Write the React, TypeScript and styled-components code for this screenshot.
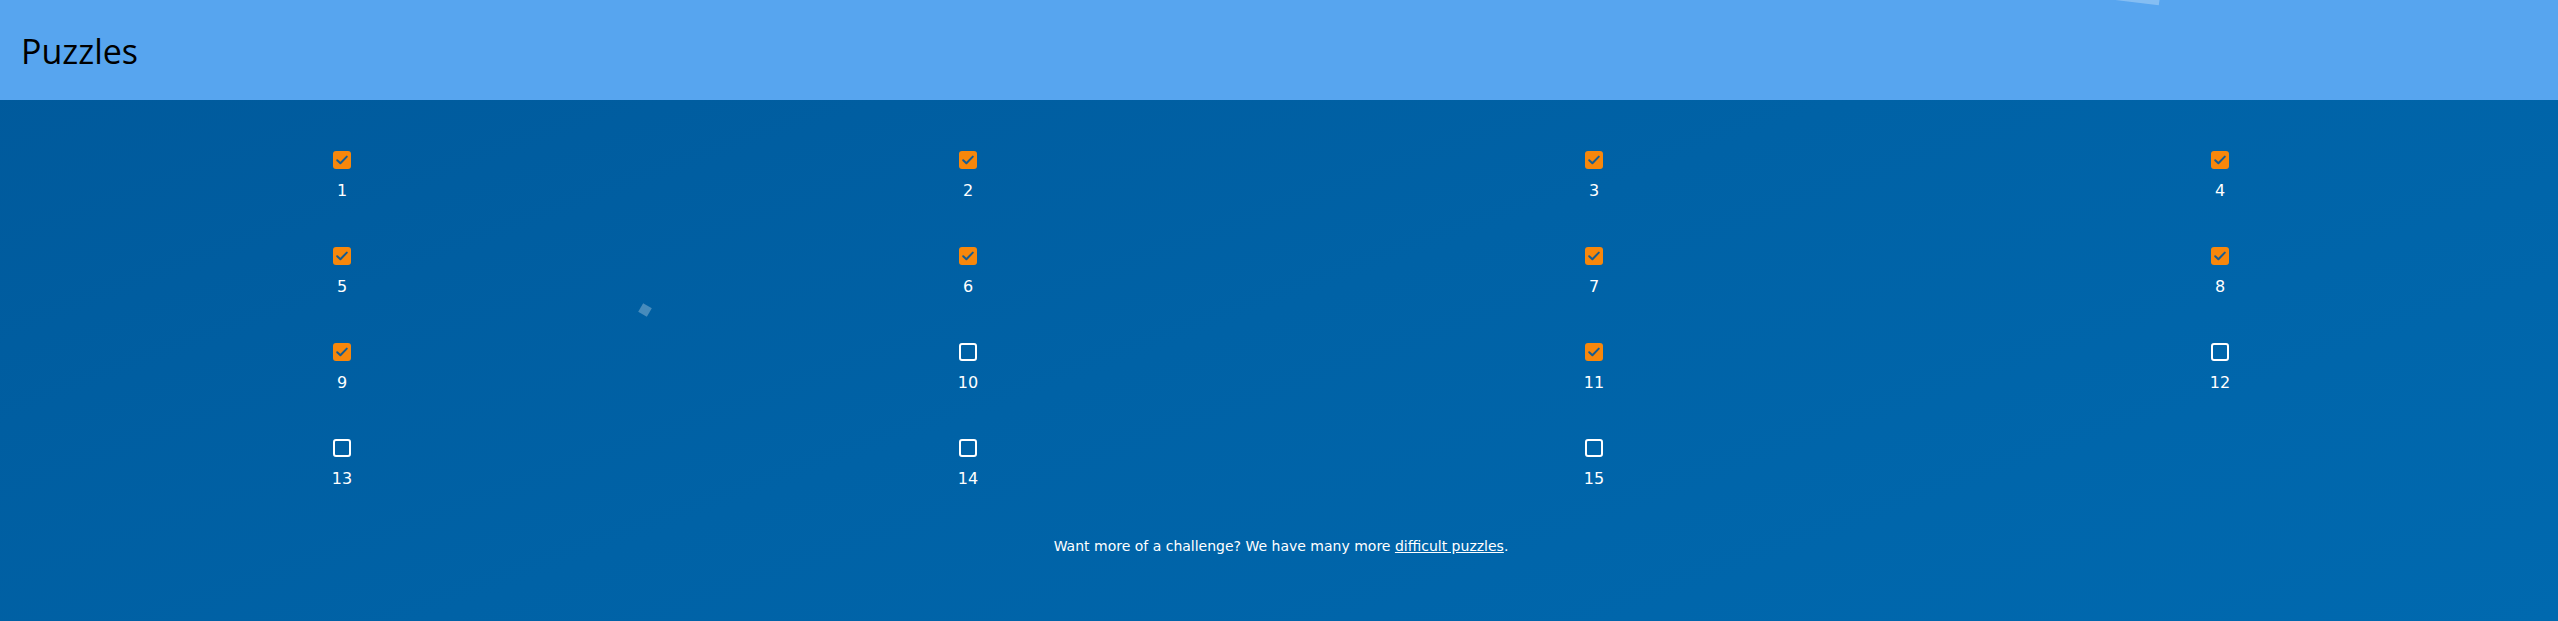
import React from 'react'
import styled, { createGlobalStyle } from 'styled-components'

const GlobalStyle = createGlobalStyle`
  html, body {
    margin: 0;
    padding: 0;
    height: 100%;
  }
  body {
    font-family: 'DejaVu Sans', Verdana, sans-serif;
    background: linear-gradient(160deg, #00599b 0%, #0062a6 50%, #0069af 100%);
    overflow: hidden;
  }
  #root {
    min-height: 100%;
  }
`

const Page = styled.div`
  position: relative;
  min-height: 621px;
  overflow: hidden;
`

const Header = styled.header`
  height: 100px;
  background: #57a5ef;
  display: flex;
  align-items: center;
  padding: 0 21px;
  box-sizing: border-box;
`

const Title = styled.h1`
  margin: 0;
  font-family: 'Open Sans', 'Noto Sans', sans-serif;
  font-weight: 400;
  font-size: 34px;
  color: #000;
  line-height: 1;
  padding-top: 2px;
`

const Main = styled.main`
  padding: 51px 25px 0 29px;
`

const Grid = styled.ul`
  list-style: none;
  margin: 0;
  padding: 0;
  display: grid;
  grid-template-columns: repeat(4, 1fr);
  row-gap: 47px;
`

const Item = styled.li`
  display: flex;
  flex-direction: column;
  align-items: center;
`

const Box = styled.span<{ $done: boolean }>`
  width: 18px;
  height: 18px;
  box-sizing: border-box;
  border-radius: 3px;
  display: flex;
  align-items: center;
  justify-content: center;
  background: ${({ $done }) => ($done ? '#f7870b' : 'transparent')};
  border: ${({ $done }) => ($done ? 'none' : '2px solid #ffffff')};
  margin-bottom: 12px;
`

const Label = styled.span`
  color: #fff;
  font-size: 16px;
  line-height: 19px;
`

const Footer = styled.p`
  margin: 50px 0 0;
  text-align: center;
  color: #fff;
  font-size: 14px;
  line-height: 17px;

  a {
    color: #fff;
    text-decoration: underline;
  }
`

const Confetti = styled.span<{ $x: number; $y: number; $w: number; $h: number; $r: number }>`
  position: absolute;
  left: ${({ $x }) => $x}px;
  top: ${({ $y }) => $y}px;
  width: ${({ $w }) => $w}px;
  height: ${({ $h }) => $h}px;
  background: rgba(255, 255, 255, 0.28);
  transform: rotate(${({ $r }) => $r}deg);
`

const Check = () => (
  <svg width="14" height="14" viewBox="0 0 14 14" fill="none">
    <path d="M2.2 7.2 L5.4 10.2 L11.8 3.6" stroke="#155c93" strokeWidth="2" strokeLinecap="round" strokeLinejoin="round" />
  </svg>
)

const solved = [1, 2, 3, 4, 5, 6, 7, 8, 9, 11]
const puzzles = Array.from({ length: 15 }, (_, i) => i + 1)

export default function App() {
  return (
    <Page>
      <GlobalStyle />
      <Header>
        <Title>Puzzles</Title>
      </Header>
      <Main>
        <Grid>
          {puzzles.map((n) => {
            const done = solved.includes(n)
            return (
              <Item key={n}>
                <Box $done={done}>{done && <Check />}</Box>
                <Label>{n}</Label>
              </Item>
            )
          })}
        </Grid>
        <Footer>
          Want more of a challenge? We have many more <a href="#">difficult puzzles</a>.
        </Footer>
      </Main>
      <Confetti $x={2104} $y={-14} $w={56} $h={16} $r={7} />
      <Confetti $x={640} $y={305} $w={10} $h={10} $r={30} />
    </Page>
  )
}
